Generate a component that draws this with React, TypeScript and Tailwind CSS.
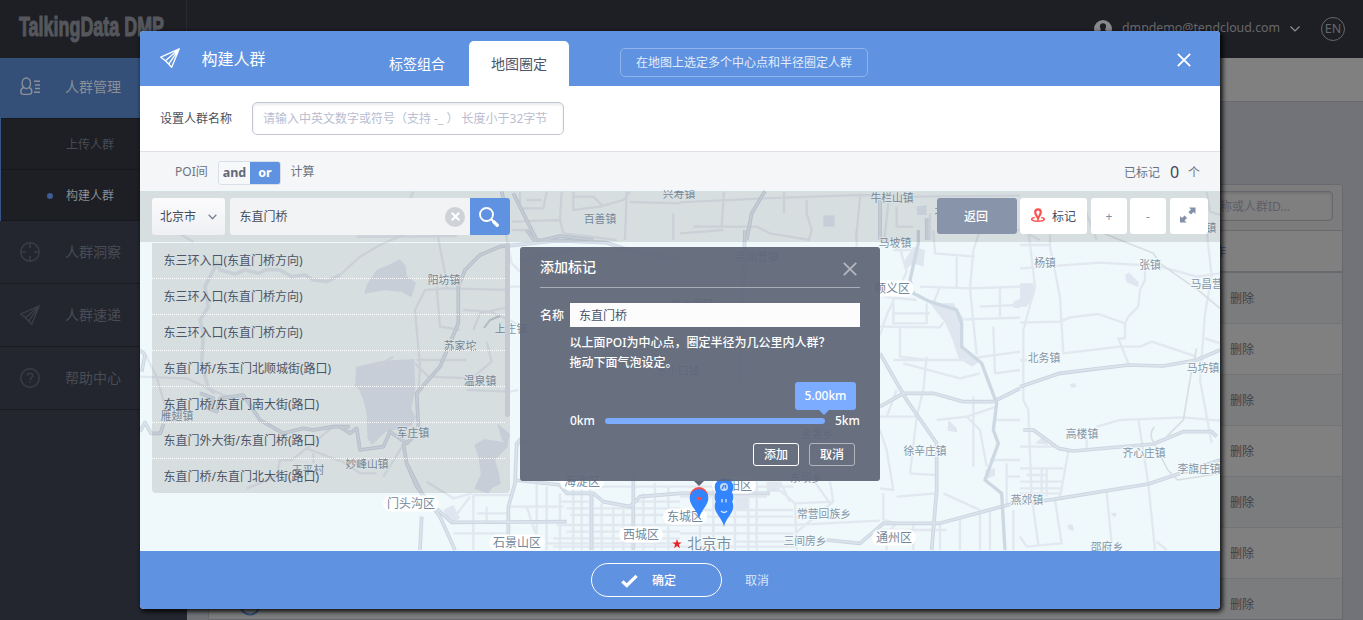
import React from "react";

const FONT = "font-['Noto_Sans','Noto_Sans_CJK_SC',sans-serif]";

type IconProps = { className?: string };

const PlaneIcon = ({ className }: IconProps) => (
  <svg className={className} width="20" height="20" viewBox="0 0 20 20" fill="none" stroke="currentColor" strokeWidth="1.4" strokeLinejoin="round">
    <path d="M19.2.8.8 9.2l4.700 3.500L11.700 19.200 19.200.800 5.500 12.700M19.200.800 8.800 15.800" />
  </svg>
);

const PeopleIcon = () => (
  <svg width="20" height="20" viewBox="0 0 20 20" fill="none" stroke="currentColor" strokeWidth="1.4">
    <ellipse cx="6.300" cy="6.300" rx="4.200" ry="5.300" />
    <path d="M3.600 10.500C.800 11.500.800 13 .800 14.500c0 2 1.500 2.900 3 2.900h5c1.500 0 3-.900 3-2.900 0-1.500 0-3-2.800-4M14 4.300h6M15 8h5M15 11.500h5M14 15.300h6" />
  </svg>
);

const TargetIcon = () => (
  <svg width="20" height="20" viewBox="0 0 20 20" fill="none" stroke="currentColor" strokeWidth="1.4">
    <circle cx="10" cy="10" r="9.200" />
    <path d="M10 1v5M10 14v5M1 10h5M14 10h5" />
  </svg>
);

const HelpIcon = () => (
  <svg width="20" height="20" viewBox="0 0 20 20" fill="none" stroke="currentColor" strokeWidth="1.400">
    <circle cx="10" cy="10" r="9.200" />
    <path d="M7.300 7.800C7.300 4.500 12.800 4.500 12.800 7.800 12.800 9.700 10 9.700 10 12.200M10 13.700v1.500" />
  </svg>
);

const CloseIcon = ({ className }: IconProps) => (
  <svg className={className} width="14" height="14" viewBox="0 0 14 14" fill="none" stroke="currentColor" strokeWidth="1.900">
    <path d="M.8.8l12.400 12.400M13.200.800.800 13.200" />
  </svg>
);

/* ---------- page behind the dialog ---------- */

const MENU = [
  { text: "人群洞察", icon: <TargetIcon /> },
  { text: "人群速递", icon: <PlaneIcon /> },
  { text: "帮助中心", icon: <HelpIcon /> },
];

function Sidebar() {
  return (
    <nav className="w-[187px] shrink-0 bg-[#23262f] text-sm text-[#494c55]">
      <div className="flex h-[60px] items-center bg-[#345079] pb-0.5 pl-5 text-[#8b8f97]">
        <PeopleIcon />
        <span className="ml-[25px]">人群管理</span>
      </div>
      <div className="border-l border-[#345586] bg-[#1d1f25] text-xs">
        <div className="flex h-[52px] items-center border-b border-t border-[#16181c] pl-[65px] pt-0.5 text-[#494b52]">上传人群</div>
        <div className="flex h-[51px] items-center border-b border-[#16181c] pl-[46px] pt-0.5 text-[#8c8d90]">
          <i className="mr-[13px] size-1.5 rounded-full bg-[#3c5c92]" />构建人群
        </div>
      </div>
      {MENU.map((m) => (
        <div key={m.text} className="flex h-[63px] items-center border-b border-[#191b20] pl-5">
          <span className="text-[#3b3e47]">{m.icon}</span>
          <span className="ml-[25px]">{m.text}</span>
        </div>
      ))}
    </nav>
  );
}

function BackPage() {
  return (
    <div className="flex h-[620px] flex-col">
      <header className="flex h-[58px] shrink-0 items-center bg-[#1e1f24]">
        <div className="h-full w-[187px] border-r border-[#292a30]">
          <svg width="185" height="58" viewBox="0 0 185 58">
            <text x="19" y="35.500" textLength="145" lengthAdjust="spacingAndGlyphs" fontSize="27" fontWeight="700" fontFamily="Liberation Sans Narrow, Liberation Sans, sans-serif" fill="#55575d" stroke="#55575d" strokeWidth="1.100">TalkingData DMP</text>
          </svg>
        </div>
        <div className="ml-auto flex items-center text-[#67686b]">
          <svg width="18" height="18" viewBox="0 0 18 18">
            <circle cx="9" cy="9" r="9" fill="#88898b" />
            <path d="M9 3.200c4 0 3.500 4.500 2 6 .200 1.800 2 1.800 3.500 3.500-2.500 3.500-8.500 3.500-11 0C5 11 6.800 11 7 9.200c-1.500-1.500-2-6 2-6z" fill="#1e1f24" />
          </svg>
          <span className="ml-2.5 w-[158px] whitespace-nowrap pb-px text-[12.350px]">dmpdemo@tendcloud.com</span>
          <svg className="ml-2.5" width="10" height="6" viewBox="0 0 10 6" fill="none" stroke="#909193" strokeWidth="1.200"><path d="M.500.500 5 5 9.500.500" /></svg>
          <span className="ml-[21px] mr-[18px] flex size-6 items-center justify-center rounded-full border border-[#67686b] text-[12.500px]">EN</span>
        </div>
      </header>
      <div className="flex min-h-0 flex-1">
        <Sidebar />
        <main className="flex flex-1 flex-col bg-[#727379]">
          <div className="h-11 shrink-0 border-b border-[#6b6c70] bg-[#808080]" />
          <section className="ml-[21px] mr-5 mt-[82px] min-h-0 flex-1 overflow-hidden rounded-t border border-[#67696e] bg-[#808080] text-xs">
            <div className="flex h-[46px] items-center justify-end border-b border-[#686a70] bg-[#7c7c7c] pb-[9px] pr-[9px] pt-1.5">
              <div className="flex h-[30px] w-[250px] items-center whitespace-nowrap rounded border border-[#66676d] bg-[#7f7f7f] pl-[64px] pt-px text-[#5d5e69] shadow-[inset_0_1px_3px_#6d6d6f]">请输入人群名称或人群ID...</div>
            </div>
            <div className="flex h-[42px] items-center justify-end border-b-2 border-[#686a70] bg-[#808080] pr-[116px] pt-0.5 text-[#344e78]">操作</div>
            {[0, 1, 2, 3, 4, 5, 6].map((i) => (
              <div key={i} className="flex h-[51px] items-center justify-between border-b border-[#737476] bg-[#808080] pl-[30px] pr-[88px] pt-0.5 text-[#404147] odd:bg-[#7b7c7d]">
                <svg width="22" height="22" viewBox="0 0 22 22" fill="none" stroke="#344e78" strokeWidth="2"><circle cx="11" cy="11" r="9.500" /></svg>
                <span>删除</span>
              </div>
            ))}
          </section>
        </main>
      </div>
    </div>
  );
}

/* ---------- map ---------- */

const WATER: [number, number, string[]][] = [
  [340, 230, [
    "M110 120l40-17 30-15 17 20 3 30 28 20-14 44-30-17-50-4-62 10 10-30z",
    "M48 410l80-18 95-5 3 90-12 60 14 25-12 25-80 20-40 38-14-20-2-75-10-40-12-30-13-12z",
    "M403 645l30-18 60 10 12 12-22 22-18 20 12 40 5 30-25 12-12 18-42-15 20-45-8-50zM472 580l38 32-8 35-18-20z",
    "M310 840l30-15 20 40-30 15z",
  ]],
  [680, 230, [
    "M675 90l25-40 35 10-5 50-30-10-25 20z",
    "M750 220l70 0 30 45-4 85 55 42-25 18-40-25-20-60-20-45z",
    "M1000 215l20-8v28l-20-2zM805 570l26 25v12l-28-5zM915 720l30-5v22l-25 10z",
    "M260 755h40v30h-40zM160 780h45v60h-35z",
  ]],
  [1020, 230, [
    "M315 135l12-7 28 27v17l-35-15zM0 160l40 0 5 30-25 40-20 0zM150 462l15-3 4 12-15 3zM45 640l30-25 10 30zM142 885l15-2 6 20-18-5zM272 850l15-2 4 8-10 5z",
  ]],
  [680, 0, ["M430 646h34v34h-34zM710 620l30-5v30h-28z"]],
];

const MINOR: [number, number, string[]][] = [
  [340, 230, [
    "M0 135L60 80 120 45 200 10M290 0L315 130 320 175 510 180M320 175L255 180 225 240 240 410 235 490M290 170l10 120 60 10M400 300l20-50 90-20M225 400l40 40 130 5 60-50-15-60M230 390h150M380 480l130 5 25-5M510 170h30M370 240l80 5 90 40M130 740l60-95M0 690l60 40 50 0M160 380l-50 30M495 0l20 100 25 25M260 755l80 50 55-15M345 860l45-60M525 650l60-30",
    "M400 960V795h110M340 910h170M410 850h100M440 830v50M510 830h160M590 750v210M560 830l30 90M620 770v190M660 790v170M700 700v260M725 770v190M750 770v190M785 820v140M820 830v130M850 830v130M910 790v170M945 760v200M985 770v190M670 770h350M680 835h340M690 855h330M650 885h370M680 905h340M640 925h380M510 940h510M640 950h380M660 815h100M880 815h140",
  ]],
  [680, 230, [
    "M0 770h340M0 800h260M0 840h340M0 860h340M0 885h340L600 872M0 910h340M0 950h345M160 935h280M60 755v205M100 755v205M165 755v205M205 755v205M230 755v205M270 755L345 820 350 960M345 820l115-5-10-60M345 910l115-95M400 750l50 70M300 755l30 60",
    "M600 40l60 15 20 70-60 130-20 60M640 60l60 0M720 170l150 5L880 60 900 0M760 0l5 70 120 10M870 175l150-5M610 200l100 10M640 220v60h100v-60M640 250h110M600 290l180 2 10-15M850 268l170-5M660 290v90l80 10M640 390l200 0 180-25M740 380l-10 100-20 80-20 170M670 400l170 45 60-15M940 290l5 140 75-10M870 175l20 200M600 600l20 60 20 120-40-5M690 730l75 5M860 560l40 40 20 110M880 500v210M770 570l90-10 90-30M610 790v80l40 10-60 60M790 790l110 50M780 880v80M840 865v95M900 850v110M930 840v120M980 700v120M930 690h90M980 740h40M600 900h200M650 800l120-10M940 570h80M530 0v50M830 80v90M780 170l-20 50M960 170v90M900 230l110-5M720 560l-120 0M650 480l-30 80M1000 840v120M620 905v55M700 885v75",
  ]],
  [1020, 230, [
    "M0 278l120-3 30-13 85-10 80 28v45h-20l30 75M315 280l10-20 30-30 5-50 15-30v-30M90 0v50l30 150 10 170 170-20h60l35-15 135 45M0 115l240-17 120 7 60 5 110 30 70-10M560 0l15 140-20 110-15 200 35 190M230 590l70-20 50-2 140-6 110 10M355 568l30 194 20 198M0 650h110M145 665l-25 135M0 715h130M20 735h60M0 755h125M0 775h125M0 790h120M65 715v85M80 715v85M105 810l20 130-105 10-20-30M35 800l20 145M200 620v35M260 785l15 155M25 0l20 170-35 130v210l15 30 10 260M410 935l30 25M0 45h90M555 325l45 15M0 390h20",
  ]],
  [680, 0, [
    "M0 607l250-12 150-5 140-5 160 5 320-3M132 575l-7 105 105 0 40 20 120 20M312 575v65M380 600v40l15 50-8 30M540 590l-12 130M625 610l-12 110M650 620v60h50M40 680h85M0 700l130-10M750 640v80M870 680l150 10",
  ]],
  [340, 0, [
    "M220 575l-30 65M50 710l140 0 160-2M515 665l145-5 5-85M540 575v50h70l10-50M560 600h45M700 575v55l80-10 70-20 20-25M870 606l150 4M860 575l-5 145M660 660l10 40 160 20M1000 640v80M515 690l50 0M700 590h60l30 30",
  ]],
  [1020, 0, ["M0 600l120 10 80 30 30 80M560 575l10 60 30 10M0 690l60 30"]],
  [0, 230, [
    "M420 440l140 5 120 55M430 362l40 78 20 70 30 70M740 775l90-35 10-50 35 0 45-35 100 38M920 655l80-65M940 670v30M520 0l60 36",
  ]],
];

const RIVER: [number, number, string[]][] = [
  [0, 230, [
    "M1020 135l-40 20-40-5-25-15-40 5-35-20-40-2-25 12-40-10-30 12-45-12-8-22-12 22-25 50 10 60-25 40 10 40-5 90 20 75 20 15",
  ]],
];

const MAJOR: [number, number, string[]][] = [
  [340, 230, [
    "M1020 85L895 70 800 38 650 32 480 50 420 75 375 120 355 170v110L300 410 230 490l5 100M190 640l10 60 30 70 70 90 45 100M200 700l50 100 85 77 345-2M245 860l-5 100M700 60L540 90M550 620l-20 20-5 120-20 70v130M525 750l135 15 20 25h80l30 25 80 15 30-30 120-10M755 790v170M880 720v240M505 875v85M560 0l30 40M0 590l30 20 20-15 10 65 70-10 20-45 50 35 25-25",
  ]],
  [680, 230, [
    "M600 370l80 140 90 130v140l-15 180M600 530l70-40h90l90 25h90l80-40M440 930l100 10 70-60h170l240-65M0 790h270M195 0L180 450",
  ]],
  [1020, 230, [
    "M0 470l120-40 120-15 85-10 105 3 100-18 70-30M10 600h30l75 55 45 8 240-21 90-37h85l15 15M0 820l100-12 285-46 215-72",
  ]],
  [680, 0, ["M255 573l-40 67-15 80M600 600v120M740 655v65"]],
  [340, 0, ["M485 575l5 20M520 580l40 80 30 60 110 2M600 722l60-14 100 12"]],
  [0, 230, ["M420 360l15 15-10 50M420 605l15-28 18 33h28l10-28M600 490l40 15-15 30 25 10 10-40 70-10 50 75 70 40 60-15 30 5 60-10 50 0"]],
];

const DARK_RIVER = "M715 0v40l-25 110 10 40 50 25 80 25 15 40v70l60 50 45 120-10 80 15 40-40 110 50 40 10 170";

const layer = (items: [number, number, string[]][]) =>
  items.map(([x, y, ds], i) => (
    <g key={i} transform={`translate(${x} ${y}) scale(.33333)`}>
      {ds.map((d) => <path key={d} d={d} />)}
    </g>
  ));

const TOWNS: [string, number, number][] = [
  ["兴寿镇", 679, 198], ["百善镇", 600, 223], ["牛栏山镇", 892, 202], ["北石槽镇", 956, 215], ["马坡镇", 895, 247],
  ["木林镇", 1200, 232], ["阳坊镇", 444, 284], ["上庄镇", 511, 333], ["苏家坨", 460, 350], ["温泉镇", 480, 385],
  ["军庄镇", 413, 437], ["妙峰山镇", 367, 468], ["王平村", 308, 474], ["雁翅镇", 177, 420], ["杨镇", 1045, 267],
  ["张镇", 1150, 269], ["马昌营镇", 1212, 288], ["北务镇", 1044, 362], ["马坊镇", 1203, 372], ["高楼镇", 1082, 438],
  ["齐心庄镇", 1144, 457], ["李旗庄镇", 1199, 473], ["燕郊镇", 1027, 504], ["邵府乡", 1107, 551], ["徐辛庄镇", 925, 455],
  ["常营回族乡", 824, 518], ["三间房乡", 805, 545], ["高丽营镇", 757, 261], ["北七家镇", 692, 308], ["东小口镇", 678, 375],
  ["金盏乡", 817, 438], ["东坝乡", 806, 482],
];

const DISTRICTS: [string, number, number][] = [
  ["顺义区", 892, 293], ["门头沟区", 411, 508], ["海淀区", 582, 486], ["石景山区", 517, 547], ["西城区", 641, 539],
  ["东城区", 685, 521], ["朝阳区", 734, 490], ["通州区", 894, 542],
];

const Pin = ({ x, y }: { x: number; y: number }) => (
  <path transform={`translate(${x} ${y})`} d="M0 30C-1 22-9.300 17-9.300 9A9.300 9 0 0 1 9.300 9C9.300 17 1 22 0 30z" fill="#3385ff" />
);

function MapCanvas() {
  return (
    <svg className="block" width="1080" height="361" viewBox="140 190 1080 361" fill="none" strokeLinejoin="round">
      <rect x="140" y="190" width="1080" height="361" fill="#eff8fa" />
      <g fill="#dfe6f0">{layer(WATER)}</g>
      <g stroke="#e2e8f0" strokeWidth="7">{layer(MINOR)}</g>
      <g stroke="#e0e7ef" strokeWidth="11">{layer(RIVER)}</g>
      <g stroke="#c9d4e0" strokeWidth="11">{layer(MAJOR)}</g>
      <g stroke="#dae2eb" strokeWidth="6">{layer(MAJOR)}</g>
      <g transform="translate(680 230) scale(.33333)"><path d={DARK_RIVER} stroke="#ccd8e2" strokeWidth="10" /></g>
      <g transform="translate(1020 230) scale(.33333)" stroke="#d9dee3" strokeWidth="5">
        <path d="M250 10l150 60 20 30 120 85 60 50M530 355l-15 65-25 150-50 50M403 590q-20 25 0 50l40 80 30 30 127-20" />
      </g>
      <path d="M484 328l6-8 10-4" stroke="#c4ced8" strokeWidth="2" />
      <g fontSize="10.800" fill="#8296a8" textAnchor="middle" stroke="#f4fafc" strokeWidth="2" paintOrder="stroke">
        {TOWNS.map(([t, x, y]) => <text key={t} x={x} y={y}>{t}</text>)}
      </g>
      {DISTRICTS.map(([t, x, y]) => (
        <g key={t}>
          <rect x={x - t.length * 6 - 4} y={y - 12.500} width={t.length * 12 + 8} height="16" rx="8" fill="#fff" />
          <text x={x} y={y} fontSize="12" fill="#71889c" textAnchor="middle">{t}</text>
        </g>
      ))}
      <text x="687" y="548.500" fontSize="14.800" fill="#7c90a3" stroke="#f4fafc" strokeWidth="2" paintOrder="stroke">北京市</text>
      <path d="M677 539l1.200 3.400h3.600l-2.900 2.200 1.100 3.600-3-2.200-3 2.200 1.100-3.600-2.900-2.200h3.600z" fill="#ec2326" />
      <Pin x={724} y={497} />
      <Pin x={724} y={488} />
      <Pin x={724} y={478} />
      <circle cx="724" cy="487" r="4" fill="#c3dafa" />
      <path d="M722 489l2-4M725.500 488.500v-3.500" stroke="#3385ff" strokeWidth="1.500" />
      <path d="M722 499v3.500M726 499v3.500M721 511q3 3 6 0" stroke="#d6e6ff" strokeWidth="1.300" />
      <circle cx="699" cy="496" r="9" fill="#f84c4c" />
      <Pin x={699} y={489} />
      <ellipse cx="699" cy="498.500" rx="2.300" ry="1.700" fill="#f84c4c" />
    </svg>
  );
}

/* ---------- dialog ---------- */

const RESULTS = [
  "东三环入口(东直门桥方向)",
  "东三环入口(东直门桥方向)",
  "东三环入口(东直门桥方向)",
  "东直门桥/东玉门北顺城街(路口)",
  "东直门桥/东直门南大街(路口)",
  "东直门外大街/东直门桥(路口)",
  "东直门桥/东直门北大街(路口)",
];

function SearchResults() {
  return (
    <div className="absolute left-3 top-[53px] flex h-[250px] w-[358px] overflow-hidden rounded-b bg-black/10">
      <ul className="flex-1 text-xs text-[#4c5567]">
        {RESULTS.map((r, i) => (
          <li key={i} className="flex h-9 items-center border-b border-dotted border-white pl-[11.500px] last:border-0">{r}</li>
        ))}
      </ul>
      <div className="h-[174px] w-[5px] rounded-full bg-[#c5cad2]" />
    </div>
  );
}

function Toolbar() {
  const btn = "flex h-9 items-center justify-center rounded-[3px] bg-white";
  return (
    <div className="absolute inset-x-0 top-px flex h-[51px] items-start bg-black/10 px-3 pt-[7px] text-xs text-[#444c5c]">
      <div className="flex h-[37px] w-[73px] items-center rounded-[3px] bg-gradient-to-b from-[#fbfbfc] to-[#eff0f3] pl-2">
        北京市
        <svg className="ml-3" width="9" height="6" viewBox="0 0 9 6" fill="none" stroke="#78839a" strokeWidth="1.300"><path d="M.700.700l3.800 4 3.800-4" /></svg>
      </div>
      <div className="ml-[5px] flex h-[37px] w-60 items-center justify-between rounded-l-[3px] bg-[#f1f3f5] pl-[9.500px] pr-[5px]">
        东直门桥
        <span className="flex size-5 items-center justify-center rounded-full bg-[#cfd3d7] text-white">
          <svg width="9" height="9" viewBox="0 0 9 9" stroke="currentColor" strokeWidth="2.200"><path d="M.800.800l7.400 7.400M8.200.800.800 8.200" /></svg>
        </span>
      </div>
      <div className="flex h-[37px] w-10 items-center justify-center rounded-r-[3px] bg-[#5f92e0] pr-0.5">
        <svg width="20" height="20" viewBox="0 0 20 20" fill="none" stroke="#fff"><circle cx="7.500" cy="7.500" r="6.500" strokeWidth="1.900" /><path d="M12 12l2 2" strokeWidth="2" /><path d="M14.700 14.700l3.500 3.500" strokeWidth="3.400" strokeLinecap="round" /></svg>
      </div>
      <div className="ml-auto flex">
        <div className="mr-[3px] flex h-9 w-20 items-center justify-center rounded-[3px] bg-[#8794aa] pt-px pr-0.5 font-medium text-white">返回</div>
        <div className={`${btn} mr-1 w-[67px] gap-[7px] pt-px`}>
          <svg className="-mt-[3px]" width="14" height="14" viewBox="0 0 14 14" fill="none" stroke="#fb5151">
            <path d="M7 10.500C6 8 4.200 6.500 4.200 4.200a2.800 2.800 0 0 1 5.600 0C9.800 6.500 8 8 7 10.500z" strokeWidth="2.200" />
            <path d="M3.800 9.400C-1 10.300-.500 13.200 7 13.200s8-2.900 3.200-3.800" strokeWidth="1.500" />
          </svg>
          标记
        </div>
        <div className={`${btn} mr-[3px] w-9 pt-0.5 text-[#8090a8]`}>+</div>
        <div className={`${btn} mr-1 w-9 pt-0.5 text-[#8090a8]`}>-</div>
        <div className={`${btn} w-[38px] pb-0.5 pr-0.5 text-[#8290a8]`}>
          <svg width="16" height="16" viewBox="0 0 16 16" fill="currentColor">
            <path d="M9 .500h6.500V7l-2-2-2.600 2.600-2.500-2.500L11 2.500zM0 9l2 2 2.600-2.600L7 10.900 4.500 13.500l2 2H0z" />
          </svg>
        </div>
      </div>
    </div>
  );
}

function MarkPopup() {
  return (
    <div className="absolute left-[380px] top-[57px] flex h-[234px] w-[360px] flex-col rounded-[3px] bg-[#5e6576]/93 px-5 text-xs font-medium text-white">
      <div className="flex h-[41px] items-center justify-between border-b border-[#a9adb7] text-sm">
        添加标记
        <CloseIcon className="mr-[3px] mt-1 text-[#b1b5bd]" />
      </div>
      <div className="mt-[15px] flex items-center">
        <span className="w-[30px] pt-0.5">名称</span>
        <div className="flex h-6 flex-1 items-center bg-white/98 pl-[9px] pt-0.5 font-normal text-[#4c5567]">东直门桥</div>
      </div>
      <p className="ml-[29.500px] mt-[6px] leading-5">
        以上面POI为中心点，圈定半径为几公里内人群？
        <br />
        拖动下面气泡设定。
      </p>
      <div className="ml-[30px] mt-10 flex items-center whitespace-nowrap text-[12px]">
        <span className="w-[35px] shrink-0">0km</span>
        <div className="relative h-1.5 w-[220px] shrink-0 rounded-sm bg-[#7bacff]">
          <div className="absolute -right-[31px] -top-9 flex h-7 w-[61px] items-center justify-center rounded-[3px] bg-[#7bacff]">
            5.00km
            <i className="absolute left-[24px] top-7 border-x-5 border-t-5 border-x-transparent border-t-[#7bacff]" />
          </div>
        </div>
        <span className="ml-2.5">5km</span>
      </div>
      <div className="mt-[14px] flex justify-end gap-2.5 pr-[5px]">
        <div className="flex h-[23px] w-[46px] items-center justify-center rounded-[3px] border border-white">添加</div>
        <div className="flex h-[23px] w-[46px] items-center justify-center rounded-[3px] border border-[#b2b5bc]">取消</div>
      </div>
      <i className="absolute left-[174px] top-[234px] border-x-5 border-t-5 border-x-transparent border-t-[#5e6576]" />
    </div>
  );
}

function Dialog() {
  return (
    <div className="absolute left-[140px] top-[31px] flex h-[578px] w-[1080px] flex-col overflow-hidden rounded-[4px] bg-white shadow-[2px_2px_4px_1px_#000000cc]">
      <div className="flex h-[55px] shrink-0 items-end bg-[#5f92e0] text-sm text-white">
        <div className="flex h-[55px] w-[227px] items-center pl-5">
          <PlaneIcon className="-mt-0.5" />
          <span className="ml-[21.500px] mt-px text-base">构建人群</span>
        </div>
        <div className="flex h-[45px] w-[102px] items-center pl-[22px]">标签组合</div>
        <div className="flex h-[45px] w-[100px] items-center justify-center rounded-t-[5px] bg-white text-[#4c5567]">地图圈定</div>
        <div className="mb-[9px] ml-[51px] flex h-[29px] w-[248px] items-center justify-center rounded-[5px] border border-[#90b3eb] text-xs text-[#e3edfc]">在地图上选定多个中心点和半径圈定人群</div>
        <CloseIcon className="mb-[19px] ml-auto mr-[29px]" />
      </div>
      <div className="flex h-[66px] shrink-0 items-center border-b border-[#dcdfe5] pl-5 text-xs text-[#4a505c]">
        <span className="w-[92px] pt-px">设置人群名称</span>
        <div className="flex h-[33px] w-[312px] items-center whitespace-pre rounded-[5px] border border-[#c3c7d3] pl-2.5 pt-px text-[#b9bdd1] shadow-[inset_0_2px_3px_#e9eaee]">请输入中英文数字或符号（支持 -_ ） 长度小于32字节</div>
      </div>
      <div className="flex h-[38px] shrink-0 items-center bg-[#f4f6f8] pl-[35px] pr-5 text-xs text-[#6b7280]">
        <span className="w-[43px] pt-px">POI间</span>
        <div className="mr-[9.500px] mt-[3px] flex h-6 w-[63px] overflow-hidden rounded-[3px] border border-[#d8dfe9] text-[12.500px] font-bold leading-[22px]">
          <span className="w-[31px] bg-[#f7f8fa] text-center text-[#636978]">and</span>
          <span className="w-[30px] bg-[#5f92e0] text-center text-white">or</span>
        </div>
        <span className="pt-0.5">计算</span>
        <span className="ml-auto mt-[3px]">已标记</span>
        <span className="ml-2.5 mt-px w-[18px] text-base leading-none text-[#3f4757]">0</span>
        <span className="mt-[3px]">个</span>
      </div>
      <div className="relative h-[361px] shrink-0">
        <MapCanvas />
        <Toolbar />
        <SearchResults />
        <MarkPopup />
      </div>
      <div className="flex h-[58px] shrink-0 items-center bg-[#5f92e0] pl-[451px] text-xs text-white">
        <div className="flex h-[34px] w-[131px] items-center rounded-full border border-white pl-[29px] font-medium">
          <svg className="mt-0.5" width="17" height="14" viewBox="0 0 17 14" fill="none" stroke="#fff" strokeWidth="3.200"><path d="M1.300 7.300l4.500 4.200L15.600 1.800" /></svg>
          <span className="ml-3.5 pt-0.5">确定</span>
        </div>
        <span className="ml-[23px] pt-0.5 text-[#d9e6fa]">取消</span>
      </div>
    </div>
  );
}

export default function App() {
  return (
    <div className={`${FONT} relative h-[620px] w-[1363px] overflow-hidden`}>
      <BackPage />
      <Dialog />
    </div>
  );
}
